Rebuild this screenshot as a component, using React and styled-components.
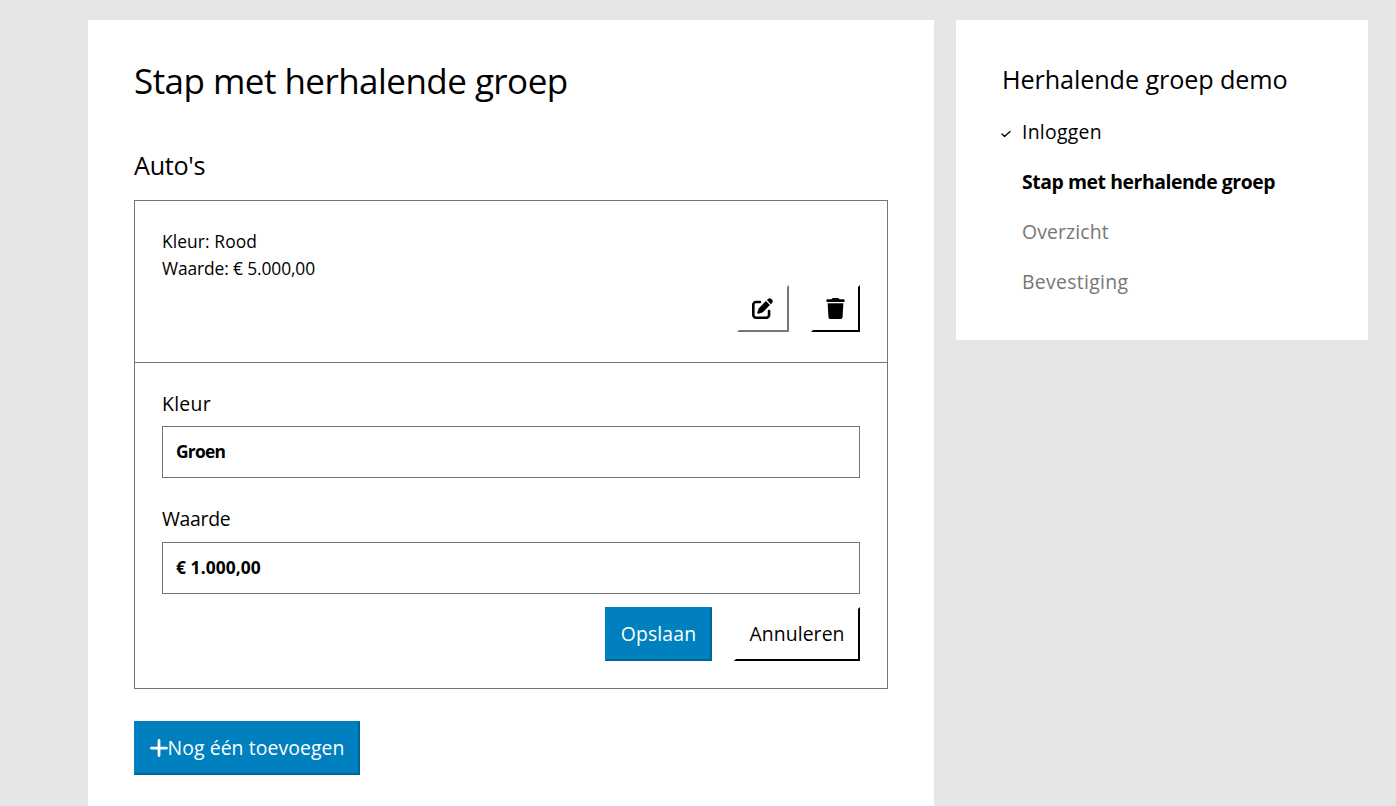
import React from 'react';
import styled, { createGlobalStyle, css } from 'styled-components';
import { FaPenToSquare, FaTrash, FaPlus } from 'react-icons/fa6';

const GlobalStyle = createGlobalStyle`
  * { box-sizing: border-box; }
  html, body { margin: 0; background: #e6e6e6; overflow: hidden; }
  body { font-family: "Open Sans", "Noto Sans", sans-serif; font-size: 19.4px; color: #000; }
  h1, h2, p, ul { margin: 0; padding: 0; }
`;

const Page = styled.div`
  display: flex;
  align-items: flex-start;
  gap: 22px;
  height: 806px;
  padding: 20px 28px 0 88px;
  overflow: hidden;
`;

const Card = styled.main`
  width: 846px;
  height: 900px;
  flex: none;
  padding: 38px 46px;
  background: #fff;
`;

const Sidebar = styled.aside`
  width: 412px;
  height: 320px;
  padding: 41px 46px;
  background: #fff;
`;

const Text = styled.span`
  white-space: pre;
  letter-spacing: ${(p) => p.$spacing || 0}px;
`;

const Title = styled.h1`
  font-size: 35px;
  font-weight: 400;
  line-height: 46px;
`;

const GroupTitle = styled.h2`
  margin-top: 44px;
  font-size: 25.2px;
  font-weight: 400;
  line-height: 34px;
`;

const Group = styled.div`
  margin-top: 18px;
  border: 1px solid #767676;
`;

const Item = styled.section`
  padding: 27px 27px ${(p) => p.$bottom || 27}px;
  & + & { border-top: 1px solid #767676; }
`;

const Summary = styled.p`
  font-size: 17.4px;
  line-height: 27px;
`;

const Actions = styled.div`
  display: flex;
  justify-content: ${(p) => (p.$start ? 'flex-start' : 'flex-end')};
  gap: 22px;
  margin-top: ${(p) => p.$top}px;
`;

const Button = styled.button`
  display: inline-flex;
  align-items: center;
  justify-content: center;
  width: ${(p) => p.$w}px;
  height: 54px;
  padding: 0 0 2px;
  border: 2px solid transparent;
  border-right-color: #000;
  border-bottom-color: #000;
  background: #fff;
  color: #000;
  font: inherit;
  ${(p) => p.$primary && css`
    background: #0080bf;
    color: #fff;
    border-color: #0080bf #006699 #006699 #0080bf;
  `}
`;

const IconButton = styled(Button)`
  height: 47px;
  padding: 0 1px 1px 0;
  ${(p) => p.$muted && css`border-right-color: #767676; border-bottom-color: #767676;`}
`;

const PlusIcon = styled(FaPlus)`
  flex: none;
  width: 20px;
  height: 22px;
  margin: 1px -1px 0 -1px;
`;

const Field = styled.label`
  display: block;
  line-height: 28px;
  & + & { margin-top: 27px; }
`;

const Value = styled.div`
  height: 52px;
  margin-top: ${(p) => p.$top}px;
  padding: 0 13px;
  border: 1px solid #767676;
  font-size: 17.4px;
  font-weight: 700;
  line-height: 49px;
`;

const SideTitle = styled.h2`
  font-size: 25.2px;
  font-weight: 400;
  line-height: 36px;
`;

const Steps = styled.ul`
  margin-top: 9px;
  list-style: none;
`;

const Step = styled.li`
  display: flex;
  align-items: center;
  height: 50px;
  color: ${(p) => (p.$todo ? '#767676' : '#000')};
  font-weight: ${(p) => (p.$current ? 700 : 400)};
`;

const Marker = styled.span`
  display: flex;
  width: 21px;
  margin-left: -1px;
  padding-top: 5px;
  flex: none;
`;

const CheckMark = () => (
  <svg width="10" height="8" viewBox="0 0 10 8" fill="none" stroke="currentColor" strokeWidth="1.3" strokeLinecap="round" strokeLinejoin="round">
    <path d="M1 4l2.6 2.5L9 1.5" />
  </svg>
);

export default function App() {
  return (
    <>
      <GlobalStyle />
      <Page>
        <Card>
          <Title><Text $spacing={-0.54}>Stap met herhalende groep</Text></Title>
          <GroupTitle><Text $spacing={-0.3}>Auto's</Text></GroupTitle>
          <Group>
            <Item $bottom={30}>
              <Summary><Text $spacing={0.1}>Kleur: Rood</Text></Summary>
              <Summary><Text $spacing={-0.12}>Waarde: € 5.000,00</Text></Summary>
              <Actions $top={3}>
                <IconButton $w={52} $muted aria-label="Bewerken"><FaPenToSquare size={21} /></IconButton>
                <IconButton $w={49} aria-label="Verwijderen"><FaTrash size={21} /></IconButton>
              </Actions>
            </Item>
            <Item>
              <Field>
                <Text $spacing={0.3}>Kleur</Text>
                <Value $top={8}><Text $spacing={-0.75}>Groen</Text></Value>
              </Field>
              <Field>
                <Text $spacing={-0.3}>Waarde</Text>
                <Value $top={9}><Text $spacing={0.08}>€ 1.000,00</Text></Value>
              </Field>
              <Actions $top={13}>
                <Button $w={107} $primary><Text $spacing={0.12}>Opslaan</Text></Button>
                <Button $w={126}><Text $spacing={0.08}>Annuleren</Text></Button>
              </Actions>
            </Item>
          </Group>
          <Actions $top={32} $start>
            <Button $w={226} $primary>
              <PlusIcon />
              <Text $spacing={0.08}>Nog één toevoegen</Text>
            </Button>
          </Actions>
        </Card>
        <Sidebar>
          <SideTitle><Text $spacing={-0.1}>Herhalende groep demo</Text></SideTitle>
          <Steps>
            <Step><Marker><CheckMark /></Marker><Text $spacing={0.28}>Inloggen</Text></Step>
            <Step $current><Marker /><Text $spacing={-0.43}>Stap met herhalende groep</Text></Step>
            <Step $todo><Marker /><Text $spacing={0.12}>Overzicht</Text></Step>
            <Step $todo><Marker /><Text $spacing={0.32}>Bevestiging</Text></Step>
          </Steps>
        </Sidebar>
      </Page>
    </>
  );
}
